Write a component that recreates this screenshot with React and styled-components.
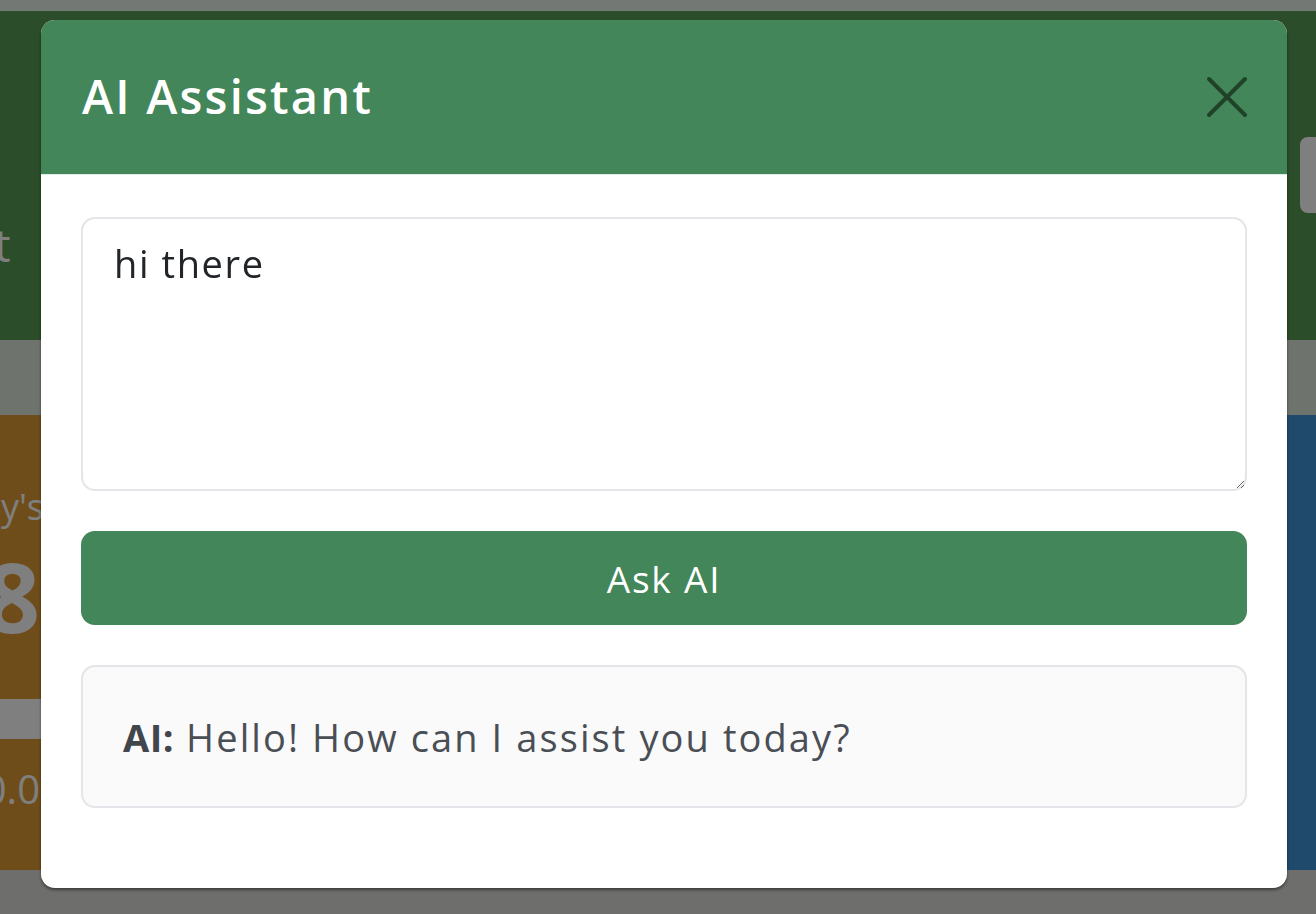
import styled, { createGlobalStyle } from 'styled-components';

const GlobalStyle = createGlobalStyle`
  html, body {
    margin: 0;
    padding: 0;
    width: 1316px;
    height: 914px;
    overflow: hidden;
    font-family: 'Open Sans', 'Noto Sans', sans-serif;
    background: #dcded8;
  }
  * { box-sizing: border-box; }
`;

/* ---------- page behind the dialog ---------- */

const Page = styled.div`
  width: 1316px;
  height: 914px;
  display: flex;
  flex-direction: column;
  overflow: hidden;
`;

const TopStrip = styled.div`
  height: 11px;
  background: #e8f0e8;
`;

const Hero = styled.header`
  height: 329px;
  background: #589a52;
  display: flex;
  align-items: flex-start;
  justify-content: space-between;
  padding-top: 126px;
`;

const HeroTitle = styled.h1`
  margin: 76px 0 0 -396px;
  font-size: 46px;
  font-weight: 400;
  color: #ffffff;
  white-space: nowrap;
`;

const HeroButton = styled.div`
  width: 40px;
  height: 76px;
  margin-right: -24px;
  border-radius: 8px;
  background: #ffffff;
`;

const Band = styled.div`
  height: 75px;
  background: #dce6dc;
`;

const Cards = styled.div`
  display: grid;
  grid-template-columns: 600px 1fr 300px;
  gap: 20px;
  height: 455px;
  margin-left: -520px;
  margin-right: -271px;
`;

const Card = styled.div`
  background: ${({ $bg }) => $bg};
  padding: 70px 36px 0 0;
  display: flex;
  flex-direction: column;
  align-items: flex-end;
  color: #ffffff;
`;

const CardLabel = styled.div`
  font-size: 36px;
  line-height: 1.2;
`;

const CardValue = styled.div`
  font-size: 96px;
  font-weight: 700;
  line-height: 1.2;
  margin: 10px 4px 0 0;
`;

const CardBar = styled.div`
  align-self: stretch;
  height: 40px;
  margin: 46px -36px 22px 0;
  background: #ffffff;
`;

const CardSub = styled.div`
  font-size: 40px;
  margin-right: 4px;
`;

/* ---------- dialog ---------- */

const Backdrop = styled.div`
  position: fixed;
  inset: 0;
  background: rgba(0, 0, 0, 0.5);
  display: flex;
  align-items: flex-start;
  padding: 20px 0 0 41px;
`;

const Dialog = styled.div`
  width: 1246px;
  height: 868px;
  background: #ffffff;
  border-radius: 14px;
  overflow: hidden;
  box-shadow: 0 2px 3px rgba(0, 0, 0, 0.45);
  display: flex;
  flex-direction: column;
`;

const DialogHeader = styled.div`
  height: 155px;
  flex-shrink: 0;
  background: #428659;
  border-bottom: 1px solid #dfeee4;
  display: flex;
  align-items: center;
  justify-content: space-between;
  padding: 0 38px 0 41px;
`;

const DialogTitle = styled.h2`
  margin: 0 0 2px 0;
  font-size: 47px;
  font-weight: 600;
  color: #ffffff;
  letter-spacing: 2.2px;
`;

const CloseButton = styled.button`
  border: 0;
  background: transparent;
  padding: 0;
  width: 44px;
  height: 44px;
  display: flex;
  align-items: center;
  justify-content: center;
  cursor: pointer;
`;

const DialogBody = styled.div`
  display: flex;
  flex-direction: column;
  gap: 40px;
  padding: 42px 40px 0 40px;
`;

const Prompt = styled.textarea`
  height: 274px;
  width: 100%;
  border: 2px solid #e3e5e8;
  border-radius: 14px;
  padding: 18px 31px;
  font-family: inherit;
  font-size: 38px;
  letter-spacing: 1.6px;
  color: #212529;
  resize: vertical;
  outline: none;
`;

const AskButton = styled.button`
  height: 94px;
  width: 100%;
  border: 0;
  border-radius: 14px;
  background: #428659;
  color: #ffffff;
  font-family: inherit;
  font-size: 37px;
  letter-spacing: 1.8px;
  cursor: pointer;
`;

const Answer = styled.div`
  height: 143px;
  border: 2px solid #e3e5e8;
  border-radius: 14px;
  background: #fafafa;
  display: flex;
  align-items: center;
  padding: 0 40px;
  font-size: 38px;
  letter-spacing: 2.1px;
  color: #4a4e55;
  b {
    font-weight: 700;
    color: #41454c;
    letter-spacing: 0.5px;
  }
`;

const CloseIcon = () => (
  <svg width="44" height="44" viewBox="0 0 44 44" fill="none">
    <path
      d="M4 4 L40 40 M40 4 L4 40"
      stroke="#1f4229"
      strokeWidth="4"
      strokeLinecap="round"
    />
  </svg>
);

const App = () => {
  return (
    <>
      <GlobalStyle />
      <Page>
        <TopStrip />
        <Hero>
          <HeroTitle>Sales Management</HeroTitle>
          <HeroButton />
        </Hero>
        <Band />
        <Cards>
          <Card $bg="#dc9a34">
            <CardLabel>Today's</CardLabel>
            <CardValue>28</CardValue>
            <CardBar />
            <CardSub>$0.0</CardSub>
          </Card>
          <Card $bg="#4094d6" />
          <Card $bg="#4094d6" />
        </Cards>
      </Page>
      <Backdrop>
        <Dialog>
          <DialogHeader>
            <DialogTitle>AI Assistant</DialogTitle>
            <CloseButton aria-label="Close">
              <CloseIcon />
            </CloseButton>
          </DialogHeader>
          <DialogBody>
            <Prompt defaultValue="hi there" />
            <AskButton>Ask AI</AskButton>
            <Answer>
              <span>
                <b>AI:</b> Hello! How can I assist you today?
              </span>
            </Answer>
          </DialogBody>
        </Dialog>
      </Backdrop>
    </>
  );
};

export default App;
